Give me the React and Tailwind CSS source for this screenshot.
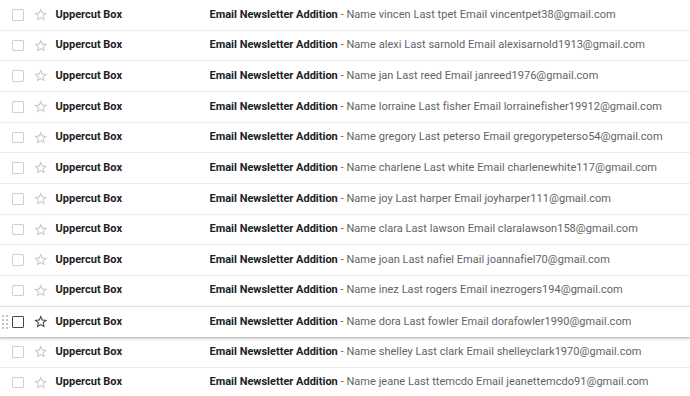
const rows = [
  ['vincen', 'tpet', 'vincentpet38@gmail.com'],
  ['alexi', 'sarnold', 'alexisarnold1913@gmail.com'],
  ['jan', 'reed', 'janreed1976@gmail.com'],
  ['lorraine', 'fisher', 'lorrainefisher19912@gmail.com'],
  ['gregory', 'peterso', 'gregorypeterso54@gmail.com'],
  ['charlene', 'white', 'charlenewhite117@gmail.com'],
  ['joy', 'harper', 'joyharper111@gmail.com'],
  ['clara', 'lawson', 'claralawson158@gmail.com'],
  ['joan', 'nafiel', 'joannafiel70@gmail.com'],
  ['inez', 'rogers', 'inezrogers194@gmail.com'],
  ['dora', 'fowler', 'dorafowler1990@gmail.com'],
  ['shelley', 'clark', 'shelleyclark1970@gmail.com'],
  ['jeane', 'ttemcdo', 'jeanettemcdo91@gmail.com'],
];

function Star({ dark }) {
  return (
    <svg viewBox="0 0 24 24" className="w-[15.5px] h-[15.5px]" fill={dark ? '#3c4043' : '#c8c8c8'}>
      <path d="M22 9.24l-7.19-.62L12 2 9.19 8.63 2 9.24l5.46 4.73L5.82 21 12 17.27 18.18 21l-1.63-7.03L22 9.24zM12 15.4l-3.76 2.27 1-4.28-3.32-2.88 4.38-.38L12 6.1l1.71 4.04 4.38.38-3.32 2.88 1 4.28L12 15.4z" />
    </svg>
  );
}

function DragHandle() {
  return (
    <div className="absolute left-[2px] top-1/2 -translate-y-1/2 grid grid-cols-2 gap-[2px]">
      {Array.from({ length: 8 }).map((_, i) => (
        <div key={i} className="w-[2px] h-[2px] bg-[#c4c4c4]" />
      ))}
    </div>
  );
}

function Row({ first, last, email, hover }) {
  return (
    <div
      className={
        'relative flex items-center h-[30.67px] pl-[12px] text-[11px] ' +
        (hover
          ? 'bg-white z-10 shadow-[0_1px_2px_0_rgba(60,64,67,0.3),0_1px_3px_1px_rgba(60,64,67,0.15)]'
          : 'bg-white border-b border-[#ececec]')
      }
    >
      {hover && <DragHandle />}
      <div
        className={
          'w-[11.5px] h-[11.5px] rounded-[1px] border-[1.5px] shrink-0 ' +
          (hover ? 'border-[#444746]' : 'border-[#cfcfcf]')
        }
      />
      <div className="ml-[9px] w-[16px] flex items-center justify-center shrink-0">
        <Star dark={hover} />
      </div>
      <div className="ml-[7px] w-[154px] shrink-0 font-bold text-[#202124]">Uppercut Box</div>
      <div className="whitespace-nowrap overflow-hidden">
        <span className="font-bold text-[#202124]">Email Newsletter Addition</span>
        <span className="text-[#5f6368] tracking-[0.04px]">
          {' '}- Name {first} Last {last} Email {email}
        </span>
      </div>
    </div>
  );
}

export default function App() {
  return (
    <div
      className="w-[690px] h-[396px] overflow-hidden bg-white"
      style={{ fontFamily: 'Roboto, "Liberation Sans", sans-serif' }}
    >
      {rows.map(([f, l, e], i) => (
        <Row key={i} first={f} last={l} email={e} hover={i === 10} />
      ))}
    </div>
  );
}
